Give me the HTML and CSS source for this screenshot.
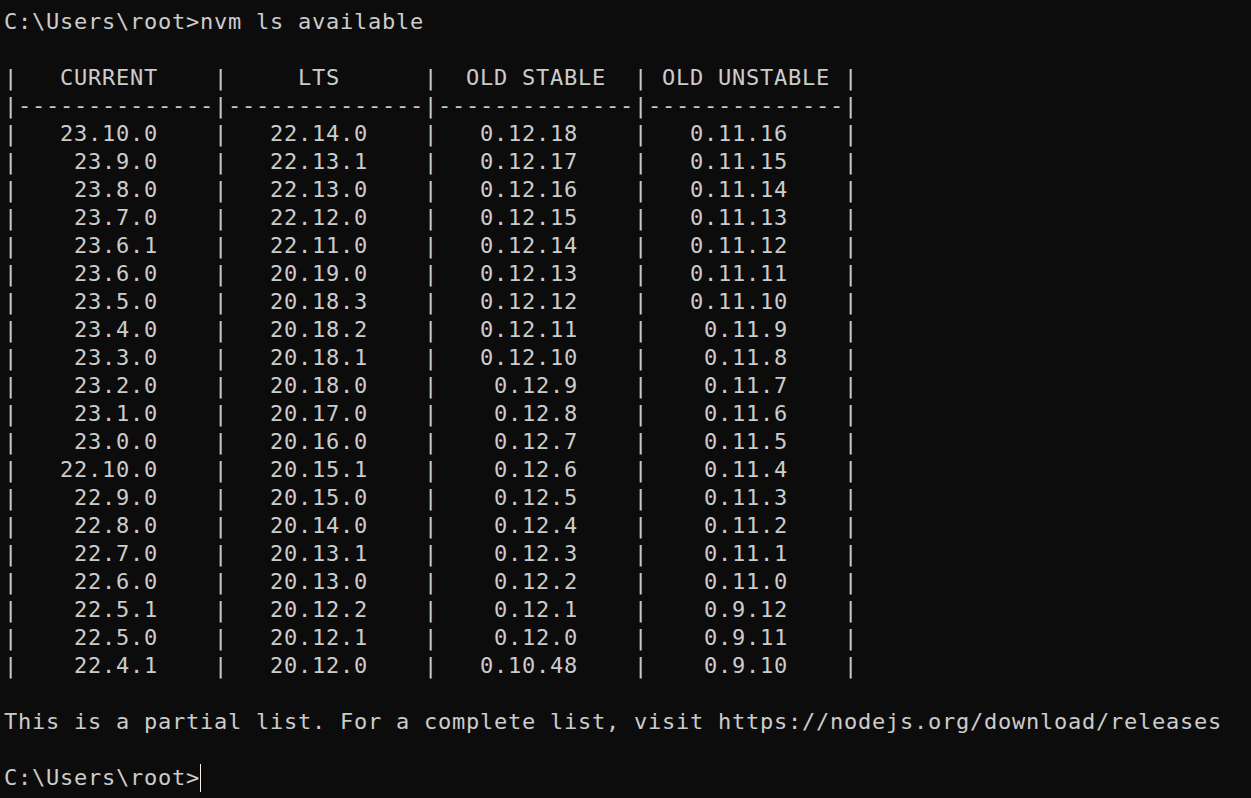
FILE: index.html
```html
<!DOCTYPE html>
<html lang="en">
<head>
<meta charset="utf-8">
<title>Command Prompt</title>
<link rel="stylesheet" href="styles.css">
</head>
<body class="console">
<pre class="screen">C:\Users\root&gt;nvm ls available

|   CURRENT    |     LTS      |  OLD STABLE  | OLD UNSTABLE |
|--------------|--------------|--------------|--------------|
|   23.10.0    |   22.14.0    |   0.12.18    |   0.11.16    |
|    23.9.0    |   22.13.1    |   0.12.17    |   0.11.15    |
|    23.8.0    |   22.13.0    |   0.12.16    |   0.11.14    |
|    23.7.0    |   22.12.0    |   0.12.15    |   0.11.13    |
|    23.6.1    |   22.11.0    |   0.12.14    |   0.11.12    |
|    23.6.0    |   20.19.0    |   0.12.13    |   0.11.11    |
|    23.5.0    |   20.18.3    |   0.12.12    |   0.11.10    |
|    23.4.0    |   20.18.2    |   0.12.11    |    0.11.9    |
|    23.3.0    |   20.18.1    |   0.12.10    |    0.11.8    |
|    23.2.0    |   20.18.0    |    0.12.9    |    0.11.7    |
|    23.1.0    |   20.17.0    |    0.12.8    |    0.11.6    |
|    23.0.0    |   20.16.0    |    0.12.7    |    0.11.5    |
|   22.10.0    |   20.15.1    |    0.12.6    |    0.11.4    |
|    22.9.0    |   20.15.0    |    0.12.5    |    0.11.3    |
|    22.8.0    |   20.14.0    |    0.12.4    |    0.11.2    |
|    22.7.0    |   20.13.1    |    0.12.3    |    0.11.1    |
|    22.6.0    |   20.13.0    |    0.12.2    |    0.11.0    |
|    22.5.1    |   20.12.2    |    0.12.1    |    0.9.12    |
|    22.5.0    |   20.12.1    |    0.12.0    |    0.9.11    |
|    22.4.1    |   20.12.0    |   0.10.48    |    0.9.10    |

This is a partial list. For a complete list, visit https://nodejs.org/download/releases

C:\Users\root&gt;<span class="cursor"></span></pre>
</body>
</html>
```

FILE: styles.css
```css
html, body {
  margin: 0;
  padding: 0;
  background: #0c0c0c;
  height: 100%;
  overflow: hidden;
}

.console {
  color: #cccccc;
}

.screen {
  margin: 0;
  padding: 8px 0 0 4px;
  font-family: "DejaVu Sans Mono", "Liberation Mono", monospace;
  font-size: 22px;
  letter-spacing: 0.755px;
  line-height: 28px;
  white-space: pre;
  color: #cccccc;
}

.cursor {
  display: inline-block;
  width: 1px;
  height: 28px;
  margin-left: 0;
  vertical-align: top;
  background: #f2f2f2;
}
```
